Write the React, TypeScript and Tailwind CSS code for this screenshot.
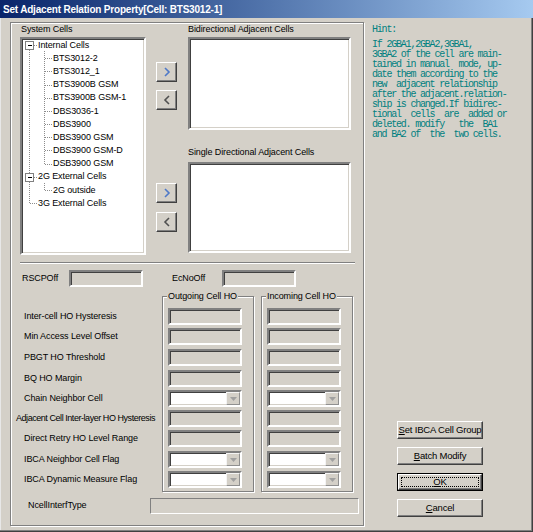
import React from "react";

const sunkenWhite =
  "bg-white border-2 border-t-[#808080] border-l-[#808080] border-r-white border-b-white shadow-[inset_1px_1px_0_#404040,inset_-1px_-1px_0_#d4d0c8]";
const sunkenGray =
  "bg-[#d4d0c8] border-2 border-t-[#808080] border-l-[#808080] border-r-white border-b-white shadow-[inset_1px_1px_0_#404040,inset_-1px_-1px_0_#d4d0c8]";
const raised =
  "bg-[#d4d0c8] border border-t-white border-l-white border-r-[#404040] border-b-[#404040] shadow-[inset_-1px_-1px_0_#808080]";

const treeItems: { t: string; lvl: number }[] = [
  { t: "Internal Cells", lvl: 0 },
  { t: "BTS3012-2", lvl: 1 },
  { t: "BTS3012_1", lvl: 1 },
  { t: "BTS3900B GSM", lvl: 1 },
  { t: "BTS3900B GSM-1", lvl: 1 },
  { t: "DBS3036-1", lvl: 1 },
  { t: "DBS3900", lvl: 1 },
  { t: "DBS3900 GSM", lvl: 1 },
  { t: "DBS3900 GSM-D", lvl: 1 },
  { t: "DSB3900 GSM", lvl: 1 },
  { t: "2G External Cells", lvl: 0 },
  { t: "2G outside", lvl: 1 },
  { t: "3G External Cells", lvl: 0 },
];

const RH = 13.17;
const yc = (i: number) => Math.floor(6.58 + RH * i) + 0.5;

function TreeLines() {
  const dash = { stroke: "#8c8c8c", strokeDasharray: "1 1", shapeRendering: "crispEdges" as const };
  return (
    <svg className="absolute left-0 top-0" width="122" height="214">
      <line x1="7.5" y1={yc(0)} x2="7.5" y2={yc(12)} {...dash} />
      {[0, 10, 12].map((i) => (
        <line key={"r" + i} x1="7.5" y1={yc(i)} x2="15" y2={yc(i)} {...dash} />
      ))}
      <line x1="22.5" y1={yc(0) + 5} x2="22.5" y2={yc(9)} {...dash} />
      {[1, 2, 3, 4, 5, 6, 7, 8, 9].map((i) => (
        <line key={"c" + i} x1="22.5" y1={yc(i)} x2="30" y2={yc(i)} {...dash} />
      ))}
      <line x1="22.5" y1={yc(10) + 5} x2="22.5" y2={yc(11)} {...dash} />
      <line x1="22.5" y1={yc(11)} x2="30" y2={yc(11)} {...dash} />
      {[0, 10].map((i) => (
        <g key={"b" + i} shapeRendering="crispEdges">
          <rect x="3.5" y={yc(i) - 4} width="8" height="8" fill="white" stroke="#808080" />
          <line x1="5.5" y1={yc(i)} x2="10" y2={yc(i)} stroke="#000" />
        </g>
      ))}
    </svg>
  );
}

function ArrowBtn({ dir, className }: { dir: "r" | "l"; className: string }) {
  return (
    <div className={raised + " w-[21px] h-[20px] flex items-center justify-center " + className}>
      <svg width="8" height="10" viewBox="0 0 8 10">
        {dir === "r" ? (
          <polyline points="2,1 6,5 2,9" fill="none" stroke="#4f79c8" strokeWidth="1.6" />
        ) : (
          <polyline points="6,1 2,5 6,9" fill="none" stroke="#505050" strokeWidth="1.6" />
        )}
      </svg>
    </div>
  );
}

function GrayBox() {
  return <div className={sunkenGray + " w-[74px] h-[17px]"} />;
}

function Combo() {
  return (
    <div className={sunkenWhite + " w-[74px] h-[17px] flex justify-end"}>
      <div className="w-[14px] h-full bg-[#d4d0c8] border border-t-[#f4f4f4] border-l-[#f4f4f4] border-r-[#909090] border-b-[#909090] flex items-center justify-center">
        <svg width="7" height="4" viewBox="0 0 7 4">
          <polygon points="0,0 7,0 3.5,4" fill="#a0a0a0" />
        </svg>
      </div>
    </div>
  );
}

const rows: { label: string; kind: "text" | "combo"; h: string; wide?: boolean }[] = [
  { label: "Inter-cell HO Hysteresis", kind: "text", h: "h-[20px]" },
  { label: "Min Access Level Offset", kind: "text", h: "h-[21px]" },
  { label: "PBGT HO Threshold", kind: "text", h: "h-[21px]" },
  { label: "BQ HO Margin", kind: "text", h: "h-[20px]" },
  { label: "Chain Neighbor Cell", kind: "combo", h: "h-[20px]" },
  { label: "Adjacent Cell Inter-layer HO Hysteresis", kind: "text", h: "h-[20px]", wide: true },
  { label: "Direct Retry HO Level Range", kind: "text", h: "h-[21px]" },
  { label: "IBCA Neighbor Cell Flag", kind: "combo", h: "h-[20px]" },
  { label: "IBCA Dynamic Measure Flag", kind: "combo", h: "h-[20px]" },
];

function HOGroup({ title }: { title: string }) {
  return (
    <div className="relative w-[92px] h-[196px] border border-[#808080] shadow-[inset_1px_1px_0_#fff,1px_1px_0_#fff]">
      <div className="absolute -top-[7px] left-[4px] bg-[#d4d0c8] px-[1px] leading-[12px] whitespace-nowrap">
        {title}
      </div>
      <div className="pt-[11px] pl-[5px] flex flex-col">
        {rows.map((r, i) => (
          <div key={i} className={r.h}>
            {r.kind === "text" ? <GrayBox /> : <Combo />}
          </div>
        ))}
      </div>
    </div>
  );
}

const hintLines = [
  "If 2GBA1,2GBA2,3GBA1,",
  "3GBA2 of the cell are main-",
  "tained in manual  mode, up-",
  "date them according to the",
  "new  adjacent relationship",
  "after the adjacent.relation-",
  "ship is changed.If bidirec-",
  "tional  cells  are  added or",
  "deleted. modify   the  BA1",
  "and BA2 of  the  two cells.",
];

function DlgButton({ children, def }: { children: React.ReactNode; def?: boolean }) {
  if (def) {
    return (
      <div className="w-[86px] h-[18px] border border-black">
        <div className="w-full h-full bg-[#d4d0c8] border border-t-white border-l-white border-r-[#404040] border-b-[#404040] shadow-[inset_-1px_-1px_0_#808080] p-[2px]">
          <div className="w-full h-full border border-dotted border-black flex items-center justify-center leading-none whitespace-nowrap">
            {children}
          </div>
        </div>
      </div>
    );
  }
  return (
    <div className={raised + " w-[86px] h-[18px] flex items-center justify-center leading-none whitespace-nowrap"}>
      {children}
    </div>
  );
}

export default function App() {
  return (
    <div className="w-[533px] h-[532px] bg-[#d4d0c8] overflow-hidden font-['Liberation_Sans',Arial,sans-serif] text-[9px] tracking-[-0.1px] text-black shadow-[inset_-1px_-1px_0_#404040,inset_-2px_-2px_0_#808080,inset_1px_0_0_#e8e8e8]">
      {/* Title bar */}
      <div className="h-[18px] bg-linear-to-r from-[#0a246a] to-[#a6caf0] flex items-center pl-[3px]">
        <span className="text-white font-bold text-[10px] tracking-[-0.2px] whitespace-nowrap">
          Set Adjacent Relation Property[Cell: BTS3012-1]
        </span>
      </div>

      <div className="flex h-[514px]">
        {/* Left group */}
        <div className="ml-[10px] mt-[4px] w-[354px] h-[504px] border border-[#808080] shadow-[inset_1px_1px_0_#fff,1px_1px_0_#fff] flex flex-col">
          {/* top section */}
          <div className="flex">
            <div className="ml-[9px] flex flex-col">
              <div className="h-[14px] flex items-center pl-[1px] whitespace-nowrap">System Cells</div>
              <div className={sunkenWhite + " relative w-[126px] h-[218px]"}>
                <TreeLines />
                <div className="relative flex flex-col">
                  {treeItems.map((it, i) => (
                    <div
                      key={i}
                      className={
                        "h-[13.17px] flex items-center whitespace-nowrap " +
                        (it.lvl === 0 ? "pl-[16px]" : "pl-[31px]")
                      }
                    >
                      {it.t}
                    </div>
                  ))}
                </div>
              </div>
            </div>
            <div className="ml-[10px] w-[21px] flex flex-col">
              <ArrowBtn dir="r" className="mt-[39px]" />
              <ArrowBtn dir="l" className="mt-[8px]" />
              <ArrowBtn dir="r" className="mt-[73px]" />
              <ArrowBtn dir="l" className="mt-[9px]" />
            </div>
            <div className="ml-[11px] flex flex-col">
              <div className="h-[14px] flex items-center whitespace-nowrap">Bidirectional Adjacent Cells</div>
              <div className={sunkenWhite + " w-[163px] h-[93px]"} />
              <div className="mt-[16px] h-[14px] flex items-center whitespace-nowrap">
                Single Directional Adjacent Cells
              </div>
              <div className={sunkenWhite + " mt-[2px] w-[163px] h-[91px]"} />
            </div>
          </div>

          {/* separator */}
          <div className="mt-[7px] ml-[9px] w-[335px] h-[2px] border-t border-t-[#808080] border-b border-b-white" />

          {/* RSCP row */}
          <div className="mt-[6px] flex items-center h-[17px]">
            <div className="ml-[11px] w-[47px] whitespace-nowrap">RSCPOff</div>
            <GrayBox />
            <div className="ml-[29px] w-[50px] whitespace-nowrap">EcNoOff</div>
            <GrayBox />
          </div>

          {/* HO groups */}
          <div className="mt-[9px] flex">
            <div className="w-[151px] pt-[12px] flex flex-col">
              {rows.map((r, i) => (
                <div key={i} className={r.h}>
                  <div
                    className={
                      "h-[17px] flex items-center whitespace-nowrap " +
                      (r.wide ? "pl-[5px] tracking-[-0.45px]" : "pl-[13px]")
                    }
                  >
                    {r.label}
                  </div>
                </div>
              ))}
            </div>
            <HOGroup title="Outgoing Cell HO" />
            <div className="ml-[7px]">
              <HOGroup title="Incoming Cell HO" />
            </div>
          </div>

          {/* NcellInterfType */}
          <div className="mt-[6px] flex items-center h-[16px]">
            <div className="ml-[17px] w-[122px] whitespace-nowrap">NcellInterfType</div>
            <div className="w-[209px] h-[16px] bg-[#d4d0c8] border border-t-[#808080] border-l-[#808080] border-r-white border-b-white" />
          </div>
        </div>

        {/* Right column */}
        <div className="flex-1 flex flex-col">
          <div className="ml-[8px] mt-[7px] font-['Liberation_Mono',monospace] text-[10px] tracking-[-1.2px] leading-[10px] text-[#008080] whitespace-pre">
            <div>Hint:</div>
            <div className="mt-[5px]">
              {hintLines.map((l, i) => (
                <div key={i}>{l}</div>
              ))}
            </div>
          </div>
          <div className="mt-auto mb-[15px] ml-[33px] flex flex-col gap-[8px] text-[9.5px] tracking-[-0.2px]">
            <DlgButton>
              <span>
                <span className="underline">S</span>et IBCA Cell Group
              </span>
            </DlgButton>
            <DlgButton>
              <span>
                <span className="underline">B</span>atch Modify
              </span>
            </DlgButton>
            <DlgButton def>
              <span>
                <span className="underline">O</span>K
              </span>
            </DlgButton>
            <DlgButton>
              <span>
                <span className="underline">C</span>ancel
              </span>
            </DlgButton>
          </div>
        </div>
      </div>
    </div>
  );
}
